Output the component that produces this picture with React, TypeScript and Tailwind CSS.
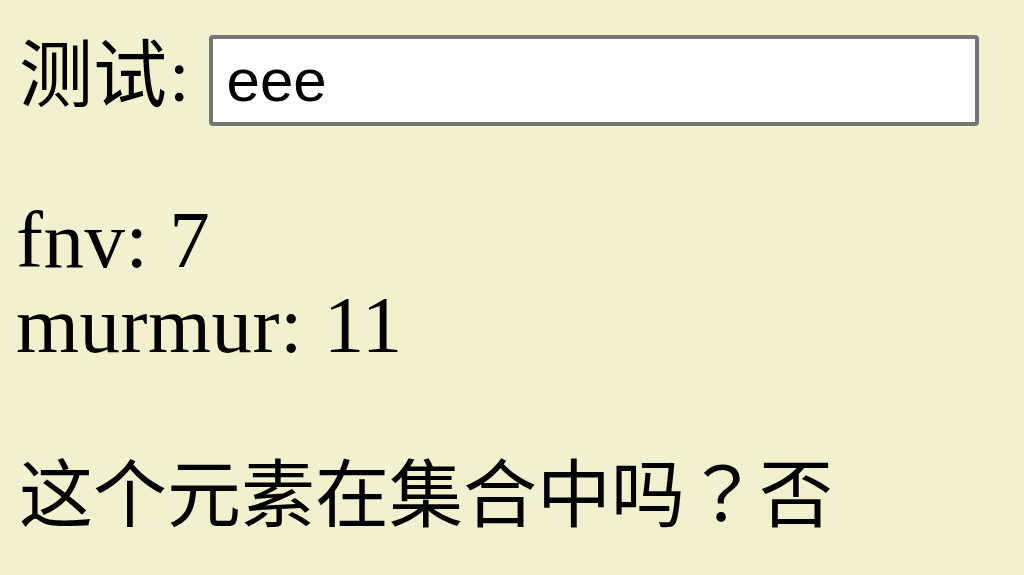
import React from 'react'

const App: React.FC = () => {
  return (
    <div className="min-h-screen w-full bg-[#f1f0cf] pl-[16px] pt-[23px] text-black font-['Liberation_Serif','Noto_Sans_CJK_SC',serif]">
      <div className="flex items-baseline pl-[3px]">
        <span className="text-[74px] leading-[91px] font-['Noto_Sans_CJK_SC',sans-serif]">测试</span>
        <span className="ml-[2px] text-[74px] leading-[91px]">:</span>
        <input
          type="text"
          defaultValue="eee"
          className="ml-[19px] w-[770px] h-[91px] border-4 border-[#767676] rounded-[4px] bg-white px-[14px] text-[60px] text-black font-['Liberation_Sans',Arial,sans-serif] outline-none"
        />
      </div>

      <p className="mt-[72px] text-[81px] leading-[85px] tracking-[0.5px]">
        fnv: 7
        <br />
        murmur: 11
      </p>

      <p className="mt-[78px] pl-[3px] text-[74px] leading-[85px] font-['Noto_Sans_CJK_SC',sans-serif]">
        这个元素在集合中吗<span className="font-['Noto_Sans_CJK_TC',sans-serif]">？</span>否
      </p>
    </div>
  )
}

export default App
